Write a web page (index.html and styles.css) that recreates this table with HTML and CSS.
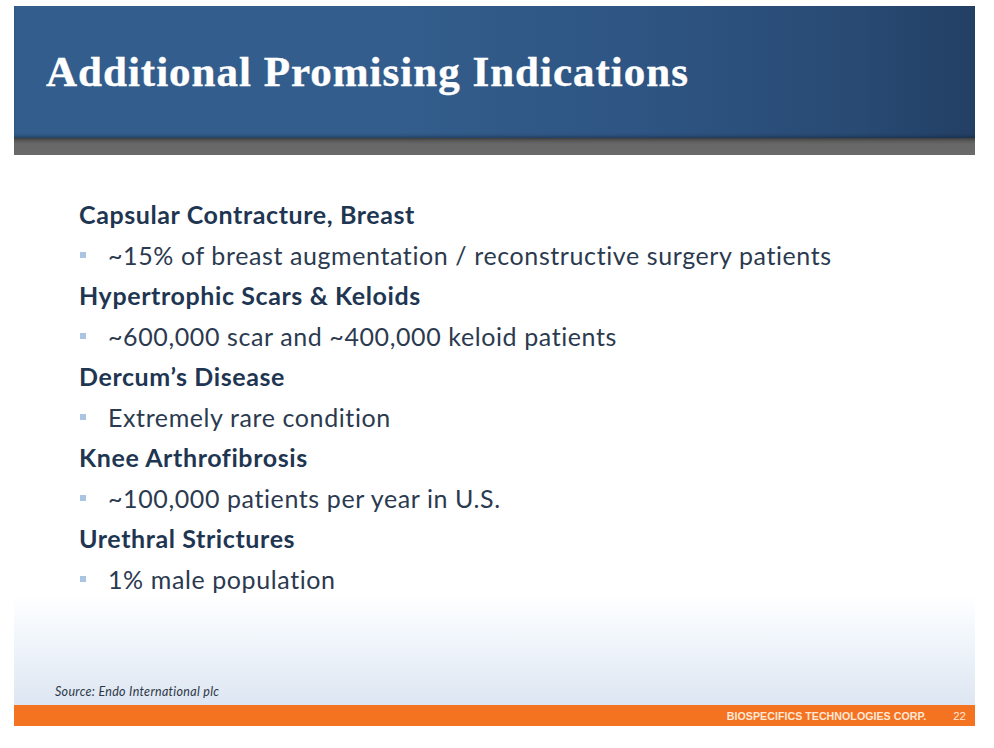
FILE: index.html
```html
<!DOCTYPE html>
<html>
<head>
<meta charset="utf-8">
<link rel="stylesheet" href="styles.css">
</head>
<body>
<div class="slide">
  <header class="banner">
    <h1 class="title">Additional Promising Indications</h1>
  </header>
  <div class="band"></div>
  <main class="content">
    <div class="head">Capsular Contracture, Breast</div>
    <div class="item">~15% of breast augmentation / reconstructive surgery patients</div>
    <div class="head">Hypertrophic Scars &amp; Keloids</div>
    <div class="item">~600,000 scar and ~400,000 keloid patients</div>
    <div class="head">Dercum’s Disease</div>
    <div class="item">Extremely rare condition</div>
    <div class="head">Knee Arthrofibrosis</div>
    <div class="item">~100,000 patients per year in U.S.</div>
    <div class="head">Urethral Strictures</div>
    <div class="item">1% male population</div>
  </main>
  <div class="lower">
    <div class="source">Source: Endo International plc</div>
  </div>
  <footer class="footer">
    <span class="corp">BIOSPECIFICS TECHNOLOGIES CORP.</span>
    <span class="page">22</span>
  </footer>
</div>
</body>
</html>
```
FILE: styles.css
```css
html, body {
  margin: 0;
  padding: 0;
  background: #ffffff;
}
.slide {
  margin: 6px 0 0 14px;
  width: 961px;
  height: 720px;
  display: flex;
  flex-direction: column;
}
.banner {
  height: 132px;
  flex: none;
  background: linear-gradient(to right, #335d8c 0%, #335d8c 40%, #2e5583 65%, #284a73 88%, #233f64 100%);
  box-shadow: inset 0 -3px 3px -1px rgba(20, 35, 55, 0.45);
  display: flex;
  align-items: flex-start;
}
.title {
  margin: 0;
  padding: 42px 0 0 32px;
  font-family: "Liberation Serif", serif;
  font-weight: bold;
  font-size: 43px;
  letter-spacing: 1px;
  line-height: 48px;
  color: #ffffff;
  -webkit-text-stroke: 0.4px #ffffff;
}
.band {
  height: 17px;
  flex: none;
  background: linear-gradient(to bottom, #3e3e3e 0px, #5a5a5a 3px, #676767 6px, #6a6a6a 100%);
}
.content {
  height: 440px;
  flex: none;
  box-sizing: border-box;
  padding: 39px 0 0 65px;
  font-family: "Lato", "Open Sans", sans-serif;
  font-size: 25px;
  letter-spacing: 0.6px;
  font-variant-ligatures: none;
  line-height: 40.5px;
}
.head {
  font-weight: bold;
  color: #1f3652;
}
.item {
  color: #2b3a4f;
  display: flex;
  align-items: center;
  padding-left: 1px;
}
.item::before {
  content: "";
  width: 6px;
  height: 6px;
  background: #a9c5e2;
  margin-right: 22px;
  flex: none;
}
.lower {
  height: 110px;
  flex: none;
  background: linear-gradient(to bottom, #ffffff 0%, #f2f7fc 35%, #e9eff7 65%, #dde6f2 100%);
  display: flex;
  align-items: flex-end;
}
.source {
  padding: 0 0 6px 41px;
  font-family: "Lato", "Open Sans", sans-serif;
  font-style: italic;
  font-size: 12.5px;
  letter-spacing: 0.3px;
  font-variant-ligatures: none;
  color: #2d3847;
}
.footer {
  height: 21px;
  flex: none;
  background: #f47321;
  display: flex;
  align-items: center;
  justify-content: flex-end;
  font-family: "Liberation Sans", Arial, sans-serif;
  font-weight: bold;
  color: #fde8d8;
}
.corp {
  font-size: 10.7px;
}
.page {
  font-weight: normal;
  font-size: 11.5px;
  margin-left: 27px;
  margin-right: 9px;
}
```
